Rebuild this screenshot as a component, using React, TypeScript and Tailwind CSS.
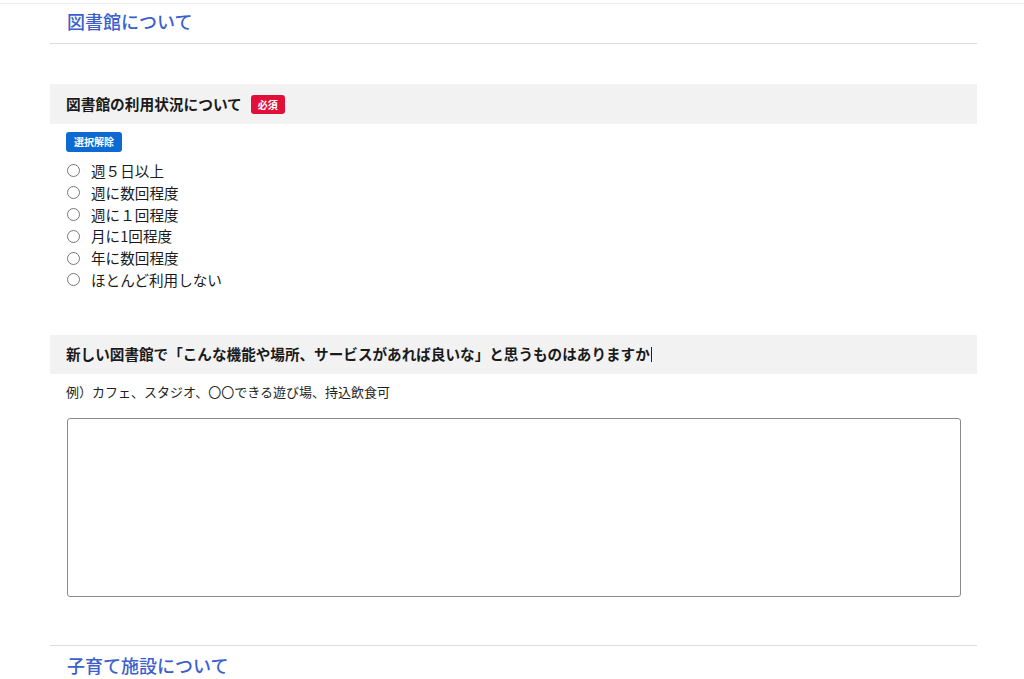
import React from "react";

const options = ["週５日以上", "週に数回程度", "週に１回程度", "月に1回程度", "年に数回程度", "ほとんど利用しない"];

export default function App() {
  return (
    <div
      className="h-[679px] overflow-hidden bg-white text-[#1a1a1a]"
      style={{ fontFamily: '"Noto Sans CJK JP", "Noto Sans", sans-serif' }}
    >
      <div className="h-[4px] border-b border-[#ececec]" />
      <div className="mx-[50px] w-[927px]">
        <div className="border-b border-[#dcdcdc] pl-[17px] pt-[4px] pb-[9px]">
          <h2 className="text-[18px] leading-[26px] text-[#3d5fcd] font-medium">図書館について</h2>
        </div>

        <div className="mt-[40px]">
          <div className="flex h-[40px] items-center bg-[#f2f2f2] pl-[16px]">
            <span className="text-[14.7px] font-bold">図書館の利用状況について</span>
            <span className="ml-[9px] rounded-[3px] bg-[#e0103a] px-[7px] text-[10px] leading-[19px] font-bold text-white">必須</span>
          </div>
          <div className="pl-[16px]">
            <button className="mt-[8px] h-[20px] rounded-[3px] bg-[#0c6ad2] px-[8px] text-[10px] font-bold leading-[20px] text-white">選択解除</button>
            <div className="mt-[8px] flex flex-col">
              {options.map((o) => (
                <label key={o} className="flex h-[21.8px] items-center">
                  <span className="ml-[1px] h-[13px] w-[13px] rounded-full border border-[#777] bg-white" />
                  <span className="ml-[11px] text-[14.6px] leading-[21.8px]">{o}</span>
                </label>
              ))}
            </div>
          </div>
        </div>

        <div className="mt-[44px]">
          <div className="flex h-[39px] items-center bg-[#f2f2f2] pl-[16px]">
            <span className="text-[14.6px] font-bold">新しい図書館で「こんな機能や場所、サービスがあれば良いな」と思うものはありますか</span>
            <span className="ml-[1px] h-[15px] w-px bg-[#222]" />
          </div>
          <p className="mt-[10px] pl-[16px] text-[13px] leading-[16px] text-[#222]">例）カフェ、スタジオ、〇〇できる遊び場、持込飲食可</p>
          <div className="mt-[18px] pl-[17px] pr-[16px]">
            <textarea className="block h-[179px] w-full resize-none rounded-[3px] border border-[#8a8a8a] bg-white" />
          </div>
        </div>

        <div className="mt-[48px] border-t border-[#dcdcdc] pl-[17px] pt-[6px]">
          <h2 className="text-[18px] leading-[26px] text-[#3d5fcd] font-medium">子育て施設について</h2>
        </div>
      </div>
    </div>
  );
}
